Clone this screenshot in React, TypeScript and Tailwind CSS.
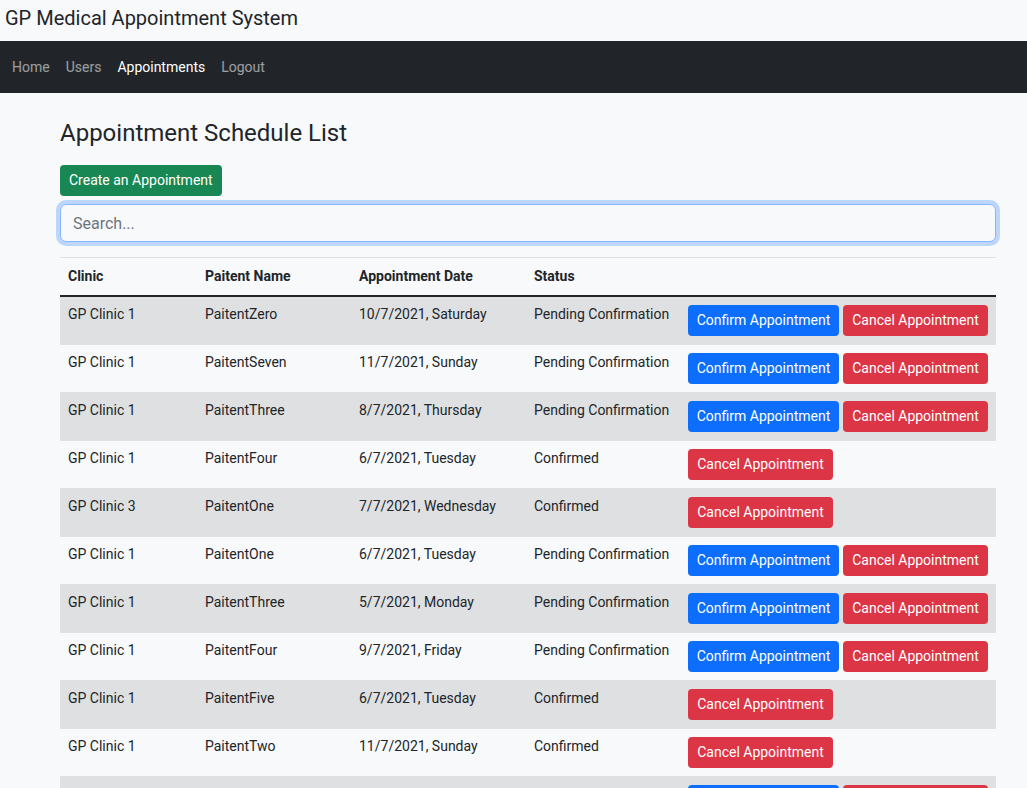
import React from 'react'

type Row = {
  clinic: string
  patient: string
  date: string
  status: 'Pending Confirmation' | 'Confirmed'
}

const rows: Row[] = [
  { clinic: 'GP Clinic 1', patient: 'PaitentZero', date: '10/7/2021, Saturday', status: 'Pending Confirmation' },
  { clinic: 'GP Clinic 1', patient: 'PaitentSeven', date: '11/7/2021, Sunday', status: 'Pending Confirmation' },
  { clinic: 'GP Clinic 1', patient: 'PaitentThree', date: '8/7/2021, Thursday', status: 'Pending Confirmation' },
  { clinic: 'GP Clinic 1', patient: 'PaitentFour', date: '6/7/2021, Tuesday', status: 'Confirmed' },
  { clinic: 'GP Clinic 3', patient: 'PaitentOne', date: '7/7/2021, Wednesday', status: 'Confirmed' },
  { clinic: 'GP Clinic 1', patient: 'PaitentOne', date: '6/7/2021, Tuesday', status: 'Pending Confirmation' },
  { clinic: 'GP Clinic 1', patient: 'PaitentThree', date: '5/7/2021, Monday', status: 'Pending Confirmation' },
  { clinic: 'GP Clinic 1', patient: 'PaitentFour', date: '9/7/2021, Friday', status: 'Pending Confirmation' },
  { clinic: 'GP Clinic 1', patient: 'PaitentFive', date: '6/7/2021, Tuesday', status: 'Confirmed' },
  { clinic: 'GP Clinic 1', patient: 'PaitentTwo', date: '11/7/2021, Sunday', status: 'Confirmed' },
  { clinic: 'GP Clinic 2', patient: 'PaitentSix', date: '12/7/2021, Monday', status: 'Pending Confirmation' },
  { clinic: 'GP Clinic 2', patient: 'PaitentEight', date: '13/7/2021, Tuesday', status: 'Confirmed' },
]

const navLinks = [
  { label: 'Home', active: false },
  { label: 'Users', active: false },
  { label: 'Appointments', active: true },
  { label: 'Logout', active: false },
]

export default function App() {
  return (
    <div className="min-h-screen bg-[#f8f9fa] text-[#212529] font-['Roboto',sans-serif] text-[14px] leading-[1.5]">
      {/* Title bar */}
      <div className="h-[41px] pl-[5px] pt-[4px] text-[20px] leading-[28px]">GP Medical Appointment System</div>

      {/* Navbar */}
      <nav className="h-[52px] bg-[#212529] flex items-center px-[4px]">
        {navLinks.map((l) => (
          <a
            key={l.label}
            href="#"
            className={`px-[8px] text-[14px] ${l.active ? 'text-white' : 'text-white/55'}`}
          >
            {l.label}
          </a>
        ))}
      </nav>

      {/* Content */}
      <div className="ml-[60px] w-[936px]">
        <h3 className="mt-[25px] text-[24px] leading-[30px] font-normal">Appointment Schedule List</h3>
        <button className="mt-[17px] h-[31px] px-[9px] rounded-[4px] bg-[#198754] text-white text-[14px]">
          Create an Appointment
        </button>
        <input
          className="mt-[8px] block w-full h-[38px] rounded-[6px] border border-[#86b7fe] bg-[#f8f9fa] px-[12px] text-[16px] outline-none shadow-[0_0_0_4px_rgba(13,110,253,0.25)] placeholder:text-[#6c757d]"
          placeholder="Search..."
        />

        <table className="mt-[15px] w-full border-t border-[#dee2e6] border-collapse text-left">
          <thead>
            <tr>
              <th className="w-[137px] px-[8px] py-[8px] font-bold">Clinic</th>
              <th className="w-[154px] px-[8px] py-[8px] font-bold">Paitent Name</th>
              <th className="w-[175px] px-[8px] py-[8px] font-bold">Appointment Date</th>
              <th className="w-[154px] px-[8px] py-[8px] font-bold">Status</th>
              <th className="px-[8px] py-[8px]"></th>
            </tr>
          </thead>
          <tbody className="border-t-2 border-[#212529]">
            {rows.map((r, i) => (
              <tr key={i} className={`border-b border-[#dee2e6] ${i % 2 === 0 ? 'bg-[#dfe0e1]' : ''}`}>
                <td className="align-top px-[8px] pt-[7px] pb-[8px]">{r.clinic}</td>
                <td className="align-top px-[8px] pt-[7px] pb-[8px]">{r.patient}</td>
                <td className="align-top px-[8px] pt-[7px] pb-[8px]">{r.date}</td>
                <td className="align-top px-[8px] pt-[7px] pb-[8px]">{r.status}</td>
                <td className="align-top px-[8px] pt-[8px] pb-[8px]">
                  <div className="flex gap-[4px]">
                    {r.status === 'Pending Confirmation' && (
                      <button className="h-[31px] px-[8px] rounded-[4px] bg-[#0d6efd] text-white text-[14px] w-[151px]">
                        Confirm Appointment
                      </button>
                    )}
                    <button className="h-[31px] px-[8px] rounded-[4px] bg-[#dc3545] text-white text-[14px] w-[145px]">
                      Cancel Appointment
                    </button>
                  </div>
                </td>
              </tr>
            ))}
          </tbody>
        </table>
      </div>
    </div>
  )
}
